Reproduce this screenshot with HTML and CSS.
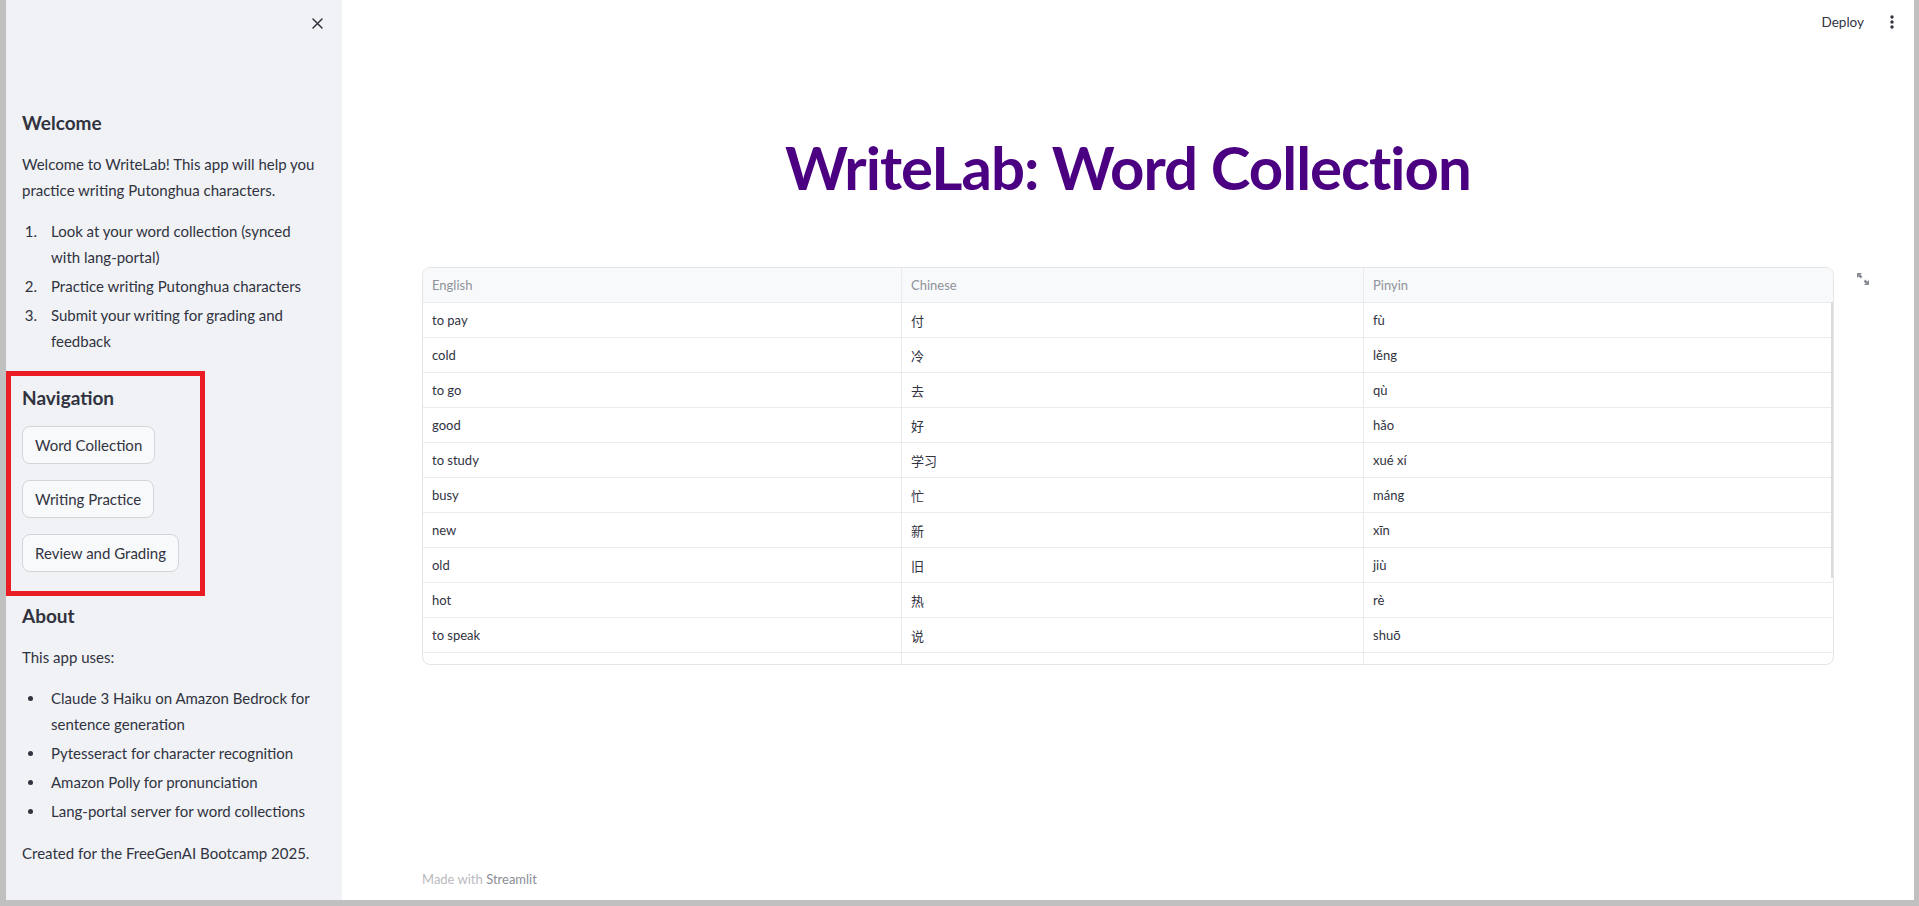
FILE: index.html
```html
<!DOCTYPE html>
<html lang="en">
<head>
<meta charset="utf-8">
<title>WriteLab: Word Collection</title>
<link rel="stylesheet" href="styles.css">
</head>
<body>
<div class="app">
  <aside class="sidebar">
    <div class="sidebar-top">
      <button class="close-btn" aria-label="Close sidebar">
        <svg width="11" height="11" viewBox="0 0 11 11"><path d="M1 1L10 10M10 1L1 10" stroke="#31333f" stroke-width="1.5" stroke-linecap="round"/></svg>
      </button>
    </div>
    <div class="sidebar-content">
      <h3 class="side-heading">Welcome</h3>
      <p class="side-text">Welcome to WriteLab! This app will help you practice writing Putonghua characters.</p>
      <ol class="num-list">
        <li>Look at your word collection (synced with lang-portal)</li>
        <li>Practice writing Putonghua characters</li>
        <li>Submit your writing for grading and feedback</li>
      </ol>
      <h3 class="side-heading section">Navigation</h3>
      <div class="nav-buttons">
        <button class="nav-btn">Word Collection</button>
        <button class="nav-btn">Writing Practice</button>
        <button class="nav-btn">Review and Grading</button>
      </div>
      <h3 class="side-heading section">About</h3>
      <p class="side-text">This app uses:</p>
      <ul class="dot-list">
        <li>Claude 3 Haiku on Amazon Bedrock for sentence generation</li>
        <li>Pytesseract for character recognition</li>
        <li>Amazon Polly for pronunciation</li>
        <li>Lang-portal server for word collections</li>
      </ul>
      <p class="side-text">Created for the FreeGenAI Bootcamp 2025.</p>
    </div>
    <div class="annotation"></div>
  </aside>
  <main class="main">
    <header class="topbar">
      <span class="deploy">Deploy</span>
      <svg class="menu-dots" width="4" height="14" viewBox="0 0 4 14"><circle cx="2" cy="2" r="1.7" fill="#31333f"/><circle cx="2" cy="7" r="1.7" fill="#31333f"/><circle cx="2" cy="12" r="1.7" fill="#31333f"/></svg>
    </header>
    <div class="content">
      <h1 class="title">WriteLab: Word Collection</h1>
      <div class="table-wrap">
        <div class="table">
          <div class="row head"><div class="cell">English</div><div class="cell">Chinese</div><div class="cell">Pinyin</div></div>
          <div class="row"><div class="cell">to pay</div><div class="cell">付</div><div class="cell">fù</div></div>
          <div class="row"><div class="cell">cold</div><div class="cell">冷</div><div class="cell">lěng</div></div>
          <div class="row"><div class="cell">to go</div><div class="cell">去</div><div class="cell">qù</div></div>
          <div class="row"><div class="cell">good</div><div class="cell">好</div><div class="cell">hǎo</div></div>
          <div class="row"><div class="cell">to study</div><div class="cell">学习</div><div class="cell">xué xí</div></div>
          <div class="row"><div class="cell">busy</div><div class="cell">忙</div><div class="cell">máng</div></div>
          <div class="row"><div class="cell">new</div><div class="cell">新</div><div class="cell">xīn</div></div>
          <div class="row"><div class="cell">old</div><div class="cell">旧</div><div class="cell">jiù</div></div>
          <div class="row"><div class="cell">hot</div><div class="cell">热</div><div class="cell">rè</div></div>
          <div class="row"><div class="cell">to speak</div><div class="cell">说</div><div class="cell">shuō</div></div>
          <div class="row"><div class="cell">to get up</div><div class="cell">起床</div><div class="cell">qǐ chuáng</div></div>
        </div>
        <div class="scroll-thumb"></div>
        <svg class="expand" width="12" height="12" viewBox="0 0 12 12"><path d="M0 0H5L3.4 1.6L5.4 3.6L3.6 5.4L1.6 3.4L0 5Z M12 12H7L8.6 10.4L6.6 8.4L8.4 6.6L10.4 8.6L12 7Z" fill="#8a8d96"/></svg>
      </div>
    </div>
    <footer class="footer">Made with <span class="brand">Streamlit</span></footer>
  </main>
</div>
</body>
</html>
```
FILE: styles.css
```css
* { box-sizing: border-box; }
html, body { margin: 0; height: 100%; }
body {
  background: #c0c0c0;
  font-family: Lato, "Noto Sans CJK SC", sans-serif;
  color: #31333f;
  overflow: hidden;
}
.app {
  display: flex;
  height: 900px;
  margin: 0 5px 0 6px;
}

/* Sidebar */
.sidebar {
  width: 336px;
  flex: none;
  background: #f0f2f6;
  position: relative;
}
.sidebar-top {
  height: 111px;
  display: flex;
  justify-content: flex-end;
  align-items: flex-start;
  padding: 18px 19px 0 0;
}
.close-btn {
  border: none;
  background: none;
  padding: 0;
  width: 11px;
  height: 11px;
  display: flex;
}
.sidebar-content { padding: 0 21px 0 16px; }
.side-heading {
  margin: 0 0 16px;
  font-size: 19px;
  line-height: 24px;
  font-weight: 700;
}
.side-heading.section { margin-top: 32px; }
.side-text {
  margin: 0 0 15px;
  font-size: 15px;
  line-height: 26px;
}
.num-list, .dot-list {
  list-style: none;
  margin: 0;
  padding: 0;
  font-size: 15px;
  line-height: 26px;
  counter-reset: item;
}
.dot-list { margin-bottom: 16px; }
.num-list li, .dot-list li {
  display: grid;
  grid-template-columns: 29px 1fr;
}
.num-list li + li, .dot-list li + li { margin-top: 3px; }
.num-list li { counter-increment: item; }
.num-list li::before {
  content: counter(item) ".";
  text-align: right;
  padding-right: 14px;
}
.dot-list li::before {
  content: "";
  width: 5px;
  height: 5px;
  border-radius: 50%;
  background: #31333f;
  margin: 11px 0 0 6px;
}
.nav-buttons {
  display: flex;
  flex-direction: column;
  align-items: flex-start;
  gap: 16px;
}
.nav-btn {
  height: 38px;
  padding: 0 12px;
  border: 1px solid #d3d5da;
  border-radius: 8px;
  background: #f8f9fb;
  color: #31333f;
  font-family: inherit;
  font-size: 15px;
}
.annotation {
  position: absolute;
  left: 0;
  top: 371px;
  width: 199px;
  height: 225px;
  border: 5px solid #ea1c24;
  pointer-events: none;
}

/* Main */
.main {
  flex: 1;
  background: #fff;
  display: flex;
  flex-direction: column;
}
.topbar {
  height: 60px;
  display: flex;
  justify-content: flex-end;
  align-items: flex-start;
  padding: 12px 20px 0 0;
  gap: 26px;
}
.deploy {
  font-size: 13.5px;
  line-height: 20px;
}
.menu-dots { margin-top: 3px; }
.content { padding: 71px 80px 0; }
.title {
  margin: 0;
  text-align: center;
  color: #4b0082;
  font-size: 60px;
  line-height: 72px;
  font-weight: 700;
  letter-spacing: -1px;
}
.table-wrap {
  position: relative;
  margin-top: 64px;
}
.table {
  border: 1px solid #e4e5e8;
  border-radius: 8px;
  height: 398px;
  overflow: hidden;
}
.row {
  display: grid;
  grid-template-columns: 479px 462px 1fr;
  height: 35px;
  border-bottom: 1px solid #ebebed;
  font-size: 13px;
}
.row.head {
  background: #f8f9fb;
  color: #8f929a;
}
.cell {
  display: flex;
  align-items: center;
  padding: 0 9px;
  border-right: 1px solid #ebebed;
  white-space: nowrap;
}
.cell:last-child { border-right: none; }
.scroll-thumb {
  position: absolute;
  right: 1px;
  top: 35px;
  width: 2px;
  height: 276px;
  background: #dcdcdf;
}
.expand {
  position: absolute;
  right: -35px;
  top: 6px;
}
.footer {
  margin-top: auto;
  padding: 0 0 11px 80px;
  font-size: 13px;
  line-height: 20px;
  color: #b9bbc0;
}
.brand { color: #8b8d95; }
```
